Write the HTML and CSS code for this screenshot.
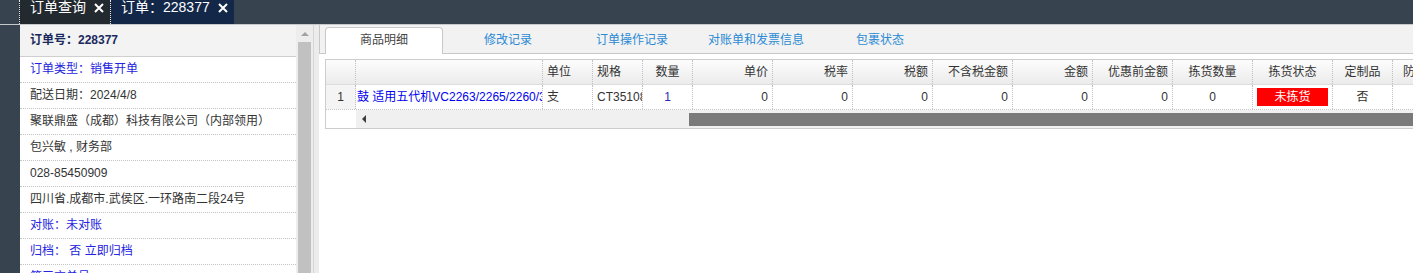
FILE: index.html
```html
<!DOCTYPE html>
<html lang="zh-CN">
<head>
  <meta charset="UTF-8">
  <meta name="viewport" content="width=device-width, initial-scale=1.0">
  <title>订单：228377</title>
  <link rel="stylesheet" href="styles.css">
</head>
<body>
  <!-- 顶部页签 -->
  <div class="topbar">
    <div class="top-tab top-tab-list">
      <span>订单查询</span>
      <svg class="close" viewBox="0 0 10 10"><path d="M1 1L9 9M9 1L1 9"/></svg>
    </div>
    <div class="top-tab top-tab-current">
      <span>订单：228377</span>
      <svg class="close" viewBox="0 0 10 10"><path d="M1 1L9 9M9 1L1 9"/></svg>
    </div>
  </div>

  <div class="main">
    <div class="rail"></div>

    <!-- 左侧订单信息 -->
    <div class="info">
      <div class="info-list">
        <div class="info-head">订单号：228377</div>
        <div class="info-row link">订单类型：销售开单</div>
        <div class="info-row">配送日期：2024/4/8</div>
        <div class="info-row">聚联鼎盛（成都）科技有限公司（内部领用）</div>
        <div class="info-row">包兴敏 , 财务部</div>
        <div class="info-row">028-85450909</div>
        <div class="info-row">四川省.成都市.武侯区.一环路南二段24号</div>
        <div class="info-row link">对账：未对账</div>
        <div class="info-row link">归档： 否 立即归档</div>
        <div class="info-row link">第三方单号：</div>
      </div>
      <div class="vscroll">
        <div class="vs-up"><span class="arrow-up"></span></div>
        <div class="vs-thumb"></div>
      </div>
    </div>

    <div class="splitter"></div>

    <!-- 右侧明细 -->
    <div class="detail">
      <div class="tabs">
        <div class="tab active">商品明细</div>
        <div class="tab">修改记录</div>
        <div class="tab">订单操作记录</div>
        <div class="tab">对账单和发票信息</div>
        <div class="tab">包裹状态</div>
      </div>

      <div class="grid">
        <div class="grid-body">
          <div class="grid-row grid-header">
            <div class="cell c-no"></div>
            <div class="cell c-name"></div>
            <div class="cell c-50">单位</div>
            <div class="cell c-50">规格</div>
            <div class="cell c-50 center">数量</div>
            <div class="cell c-80 right">单价</div>
            <div class="cell c-80 right">税率</div>
            <div class="cell c-80 right">税额</div>
            <div class="cell c-80 right">不含税金额</div>
            <div class="cell c-80 right">金额</div>
            <div class="cell c-80 right">优惠前金额</div>
            <div class="cell c-80 center">拣货数量</div>
            <div class="cell c-80 center">拣货状态</div>
            <div class="cell c-60 center">定制品</div>
            <div class="cell c-57 center">防伪码</div>
          </div>
          <div class="grid-row">
            <div class="cell c-no center">1</div>
            <div class="cell c-name goods">鼓 适用五代机VC2263/2265/2260/3370/3376</div>
            <div class="cell c-50">支</div>
            <div class="cell c-50">CT351082</div>
            <div class="cell c-50 center qty">1</div>
            <div class="cell c-80 right">0</div>
            <div class="cell c-80 right">0</div>
            <div class="cell c-80 right">0</div>
            <div class="cell c-80 right">0</div>
            <div class="cell c-80 right">0</div>
            <div class="cell c-80 right">0</div>
            <div class="cell c-80 center">0</div>
            <div class="cell c-80 center"><span class="status">未拣货</span></div>
            <div class="cell c-60 center">否</div>
            <div class="cell c-57 center"></div>
          </div>
        </div>
        <div class="hscroll">
          <div class="hs-corner"></div>
          <div class="hs-track">
            <div class="hs-left"><span class="arrow-left"></span></div>
            <div class="hs-thumb"></div>
          </div>
        </div>
      </div>
    </div>
  </div>
</body>
</html>
```

FILE: styles.css
```css
body {
  margin: 0;
  height: 273px;
  overflow: hidden;
  background: #f0f0f0;
  color: #333;
  font: 12px "Liberation Sans", "Noto Sans CJK SC", sans-serif;
}

/* 顶部页签 */
.topbar {
  display: flex;
  height: 24px;
  padding-left: 19px;
  background: #37434f;
  border-bottom: 1px solid #c6cacd;
}
.top-tab {
  display: flex;
  align-items: flex-start;
  gap: 8px;
  box-sizing: border-box;
  padding-left: 10px;
  color: #fff;
  font-size: 14px;
  line-height: 15px;
}
.top-tab-list {
  width: 92px;
  background: #22292f;
  border-left: 1px dotted #e8e8e8;
  border-right: 1px dotted #e8e8e8;
}
.top-tab-current {
  width: 123px;
  background: #132849;
}
.close {
  width: 10px;
  height: 10px;
  margin-top: 3px;
  stroke: #fff;
  stroke-width: 2;
  fill: none;
}

.main {
  display: flex;
  height: 248px;
}
.rail {
  width: 20px;
  background: #37434f;
}

/* 左侧信息 */
.info {
  display: flex;
  background: #fff;
}
.info-list {
  width: 276px;
  overflow: hidden;
}
.info-head {
  height: 31px;
  line-height: 31px;
  padding-left: 10px;
  background: #f3f3f3;
  border-bottom: 1px solid #cfcfcf;
  color: #1b2a5c;
  font-weight: bold;
}
.info-row {
  height: 25px;
  line-height: 25px;
  padding-left: 10px;
  white-space: nowrap;
  border-bottom: 1px dotted #c4c4c4;
}
.info-row.link {
  color: #2424e0;
}
.vscroll {
  width: 17px;
  background: #ededed;
}
.vs-up {
  display: flex;
  justify-content: center;
  align-items: center;
  height: 17px;
}
.arrow-up {
  width: 0;
  height: 0;
  border-left: 4px solid transparent;
  border-right: 4px solid transparent;
  border-bottom: 4px solid #a3a3a3;
}
.vs-thumb {
  height: 240px;
  margin: 0 2px;
  background: #c1c1c1;
}
.splitter {
  width: 5px;
  background: #ececec;
  border-left: 1px solid #d6d6d6;
}

/* 右侧明细 */
.detail {
  flex: 1;
  min-width: 0;
  background: #fff;
  overflow: hidden;
}
.tabs {
  display: flex;
  align-items: flex-end;
  gap: 6px;
  height: 28px;
  padding-left: 5px;
  background: #f2f2f2;
  border-left: 1px solid #c8c8c8;
  border-bottom: 1px solid #c8c8c8;
}
.tab {
  box-sizing: border-box;
  width: 118px;
  height: 27px;
  margin-bottom: -1px;
  line-height: 25px;
  text-align: center;
  color: #2b8ad4;
  border: 1px solid transparent;
  border-bottom: 0;
  border-radius: 4px 4px 0 0;
}
.tab.active {
  background: #fff;
  color: #444;
  border-color: #c8c8c8;
}

.grid {
  margin: 5px 0 0 6px;
  border: 1px solid #cdcdcd;
  border-right: 0;
}
.grid-body {
  overflow: hidden;
}
.grid-row {
  display: flex;
  height: 25px;
  line-height: 24px;
  border-bottom: 1px dotted #c4c4c4;
  box-sizing: border-box;
}
.grid-header {
  background: linear-gradient(#fdfdfd, #ebebeb);
  border-bottom: 1px solid #dedede;
}
.cell {
  flex: none;
  box-sizing: border-box;
  padding: 0 4px;
  white-space: nowrap;
  overflow: hidden;
  border-right: 1px dotted #c0c0c0;
}
.c-no { width: 30px; padding: 0; }
.c-name { width: 187px; padding: 0 1px; }
.c-50 { width: 50px; }
.c-60 { width: 60px; }
.c-57 { width: 57px; }
.c-80 { width: 80px; }
.center { text-align: center; }
.right { text-align: right; }
.grid-row:not(.grid-header) .c-no {
  background: #f4f4f4;
}
.goods { color: #0000f0; }
.qty { color: #2a2ab8; }
.status {
  display: block;
  height: 18px;
  margin-top: 3px;
  line-height: 18px;
  background: #ff0000;
  color: #fff;
}

.hscroll {
  display: flex;
  height: 18px;
}
.hs-corner {
  width: 30px;
  background: #fff;
}
.hs-track {
  flex: 1;
  display: flex;
  background: #f0f0f0;
}
.hs-left {
  display: flex;
  align-items: center;
  justify-content: center;
  width: 16px;
}
.arrow-left {
  width: 0;
  height: 0;
  border-top: 4px solid transparent;
  border-bottom: 4px solid transparent;
  border-right: 4px solid #3c3c3c;
}
.hs-thumb {
  flex: 1;
  height: 13px;
  margin: 3px 0 0 317px;
  background: #7a7a7a;
}
```
